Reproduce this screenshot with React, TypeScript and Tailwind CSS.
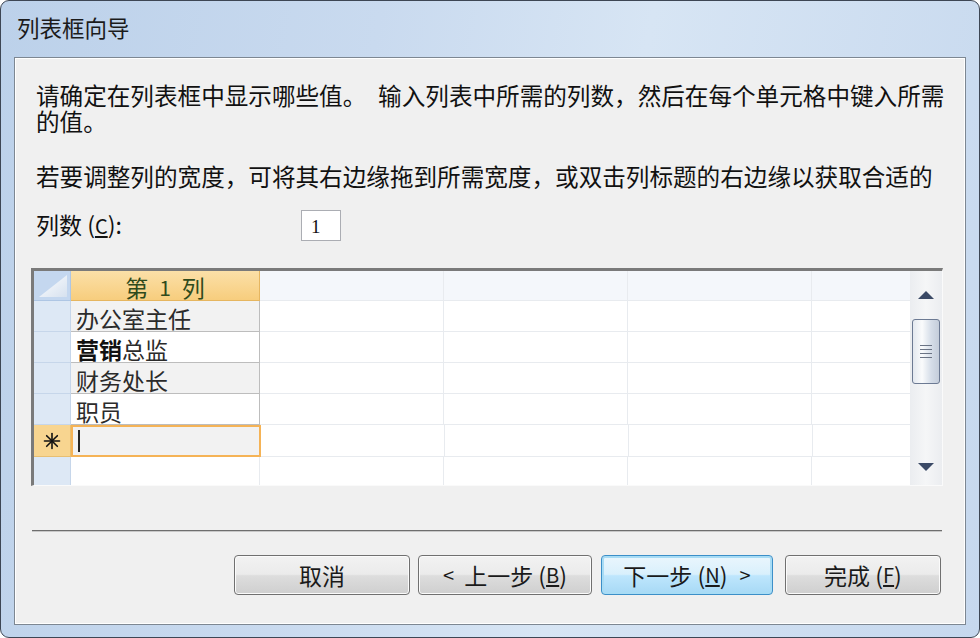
import React from "react";

const CJK = { fontFamily: '"Noto Sans CJK SC", "Noto Sans", sans-serif' };

const rows = [
  { text: "办公室主任", bg: "bg-[#f2f2f2]" },
  { text: "营销总监", bg: "bg-white", bold: 2 },
  { text: "财务处长", bg: "bg-[#f2f2f2]" },
  { text: "职员", bg: "bg-white" },
];

function OtherCells({ header = false }: { header?: boolean }) {
  const cls = header ? "bg-[#f4f7fb]" : "bg-white";
  return (
    <>
      <div className={`w-[184px] shrink-0 border-r border-b border-[#e8ebef] ${cls}`} />
      <div className={`w-[184px] shrink-0 border-r border-b border-[#e8ebef] ${cls}`} />
      <div className={`w-[184px] shrink-0 border-r border-b border-[#e8ebef] ${cls}`} />
      <div className={`flex-1 border-b border-[#e8ebef] ${cls}`} />
    </>
  );
}

function Btn({ children, w, primary = false }: { children: React.ReactNode; w: string; primary?: boolean }) {
  return (
    <div
      className={`${w} h-[40px] shrink-0 rounded-[4px] border flex items-center justify-center text-[23px] leading-none text-[#1a1a1a] whitespace-nowrap ${
        primary
          ? "border-[#3c8fc8] shadow-[inset_0_0_0_2px_#a8dcf5] bg-[linear-gradient(#eaf6fd_0%,#d9f0fc_48%,#bee6fd_52%,#a7d9f5_100%)]"
          : "border-[#707070] shadow-[inset_0_0_0_1px_#fbfbfb] bg-[linear-gradient(#f2f2f2_0%,#ebebeb_48%,#dddddd_52%,#cfcfcf_100%)]"
      }`}
    >
      {children}
    </div>
  );
}

function Star() {
  return (
    <svg width="18" height="18" viewBox="0 0 18 18" stroke="#111" strokeWidth="1.6" strokeLinecap="round">
      <line x1="9" y1="1.5" x2="9" y2="16.5" />
      <line x1="1.5" y1="9" x2="16.5" y2="9" />
      <line x1="3.7" y1="3.7" x2="14.3" y2="14.3" />
      <line x1="14.3" y1="3.7" x2="3.7" y2="14.3" />
    </svg>
  );
}

export default function App() {
  return (
    <div className="w-[980px] h-[638px] overflow-hidden bg-white" style={CJK}>
      <div className="w-full h-full rounded-[9px] border border-[#3d4654] bg-[linear-gradient(100deg,#bcd1ea_0%,#c9daef_35%,#d7e5f4_60%,#c6d8ee_100%)] flex flex-col">
        {/* title bar */}
        <div className="h-[56px] shrink-0 flex items-center pl-[16px] pb-[4px] text-[22.5px] leading-none text-[#1b1b1b]">
          列表框向导
        </div>
        {/* client */}
        <div className="flex-1 mx-[13px] mb-[12px] border border-[#7d8792] shadow-[inset_0_0_0_1px_#ffffff] bg-[#f0f0f0] flex flex-col pl-[21px] pr-[22px]">
          <div className="mt-[24px] text-[23.6px] leading-[26px] text-[#111] whitespace-nowrap">
            <div>请确定在列表框中显示哪些值。　输入列表中所需的列数，然后在每个单元格中键入所需</div>
            <div>的值。</div>
          </div>
          <div className="mt-[29px] text-[23.6px] leading-[26px] text-[#111] whitespace-nowrap">
            若要调整列的宽度，可将其右边缘拖到所需宽度，或双击列标题的右边缘以获取合适的
          </div>
          <div className="mt-[21px] h-[31px] flex items-center text-[23px] leading-none text-[#111]">
            <div className="w-[265px] pb-[2px]">
              列数 (<span className="underline underline-offset-2 text-[20px]">C</span>):
            </div>
            <div
              className="w-[40px] h-[31px] bg-white border border-[#abadb3] flex items-center pl-[9px] pt-[2px] text-[19px]"
              style={{ fontFamily: '"Liberation Serif", serif' }}
            >
              1
            </div>
          </div>

          {/* datasheet */}
          <div className="mt-[27px] ml-[-5px] h-[218px] border-t-[3px] border-l-[3px] border-t-[#7a7a7a] border-l-[#7a7a7a] border-r border-b border-r-[#fafafa] border-b-[#fafafa] bg-white flex">
            <div className="flex-1 flex flex-col">
              {/* header row */}
              <div className="h-[30px] flex shrink-0">
                <div className="w-[37px] shrink-0 bg-[#c4d7ef] border-r border-b border-[#aec6e4] relative overflow-hidden">
                  <svg className="absolute right-[3px] bottom-[3px]" width="28" height="22" viewBox="0 0 28 22">
                    <defs>
                      <linearGradient id="tri" x1="0" y1="0" x2="1" y2="1">
                        <stop offset="0" stopColor="#ffffff" />
                        <stop offset="1" stopColor="#d6e1ef" />
                      </linearGradient>
                    </defs>
                    <polygon points="28,0 28,22 0,22" fill="url(#tri)" />
                  </svg>
                </div>
                <div className="w-[189px] shrink-0 bg-[linear-gradient(#fbe0a8_0%,#f7cd7d_100%)] border-r border-b border-[#e6b660] flex items-center justify-center text-[23px] text-[#2f4a1c] leading-none pt-[3px] whitespace-nowrap">
                  <span>第</span>
                  <span className="mx-[11px] text-[21px]">1</span>
                  <span>列</span>
                </div>
                <OtherCells header />
              </div>
              {rows.map((r, i) => (
                <div key={i} className="h-[31px] flex shrink-0">
                  <div className="w-[37px] shrink-0 bg-[#dde8f5] border-r border-b border-[#c6d6ea]" />
                  <div
                    className={`w-[189px] shrink-0 ${r.bg} border-r border-b border-[#bdbdbd] flex items-end pl-[5px] text-[23px] leading-[26px] text-[#2b2b2b] whitespace-nowrap`}
                  >
                    {r.bold ? (
                      <span>
                        <span className="font-bold text-[#111]">{r.text.slice(0, 2)}</span>
                        {r.text.slice(2)}
                      </span>
                    ) : (
                      r.text
                    )}
                  </div>
                  <OtherCells />
                </div>
              ))}
              {/* new row */}
              <div className="h-[32px] flex shrink-0">
                <div className="w-[37px] shrink-0 bg-[#f8d590] border-r border-b border-[#e8bf72] flex items-center justify-center">
                  <Star />
                </div>
                <div className="w-[190px] shrink-0 bg-[#f2f2f2] border-2 border-[#f5b356] flex items-center pl-[5px]">
                  <div className="w-[2px] h-[22px] bg-[#222]" />
                </div>
                <OtherCells />
              </div>
              <div className="flex-1 flex">
                <div className="w-[37px] shrink-0 bg-[#dde8f5] border-r border-[#c6d6ea]" />
                <div className="w-[189px] shrink-0 bg-white border-r border-[#e8ebef]" />
                <div className="w-[184px] shrink-0 border-r border-[#e8ebef]" />
                <div className="w-[184px] shrink-0 border-r border-[#e8ebef]" />
                <div className="w-[184px] shrink-0 border-r border-[#e8ebef]" />
                <div className="flex-1" />
              </div>
            </div>
            {/* scrollbar */}
            <div className="w-[32px] shrink-0 bg-[linear-gradient(90deg,#ebedf0,#f5f6f7_50%,#ebedf0)] flex flex-col items-center">
              <div className="h-[30px] flex items-end justify-center pb-[2px]">
                <svg width="16" height="8" viewBox="0 0 16 8">
                  <polygon points="8,0 16,8 0,8" fill="#3b4a66" />
                </svg>
              </div>
              <div className="mt-[18px] w-[28px] h-[65px] rounded-[3px] border border-[#6c7a93] bg-[linear-gradient(90deg,#e3e8ef_0%,#fafbfc_35%,#d5dde8_70%,#c4cdda_100%)] flex flex-col items-center justify-center gap-[3px]">
                <div className="w-[12px] h-[1px] bg-[#6b7485]" />
                <div className="w-[12px] h-[1px] bg-[#6b7485]" />
                <div className="w-[12px] h-[1px] bg-[#6b7485]" />
                <div className="w-[12px] h-[1px] bg-[#6b7485]" />
              </div>
              <div className="flex-1" />
              <div className="h-[28px] flex items-start justify-center pt-[6px]">
                <svg width="16" height="8" viewBox="0 0 16 8">
                  <polygon points="0,0 16,0 8,8" fill="#3b4a66" />
                </svg>
              </div>
            </div>
          </div>

          {/* separator */}
          <div className="mt-[44px] ml-[-4px] mr-[1px] h-[2px] border-t border-[#6e6e6e] border-b border-b-[#c8c8c8]" />

          {/* buttons */}
          <div className="mt-[23px] flex items-center pl-[198px]">
            <Btn w="w-[176px]">取消</Btn>
            <div className="w-[8px]" />
            <Btn w="w-[174px]">
              <span className="mr-[10px] text-[20px]">&lt;</span>上一步 (<span className="underline underline-offset-2 text-[20px]">B</span>)
            </Btn>
            <div className="w-[9px]" />
            <Btn w="w-[172px]" primary>
              下一步 (<span className="underline underline-offset-2 text-[20px]">N</span>)<span className="ml-[12px] text-[20px]">&gt;</span>
            </Btn>
            <div className="w-[12px]" />
            <Btn w="w-[156px]">
              完成 (<span className="underline underline-offset-2 text-[20px]">F</span>)
            </Btn>
          </div>
        </div>
      </div>
    </div>
  );
}
